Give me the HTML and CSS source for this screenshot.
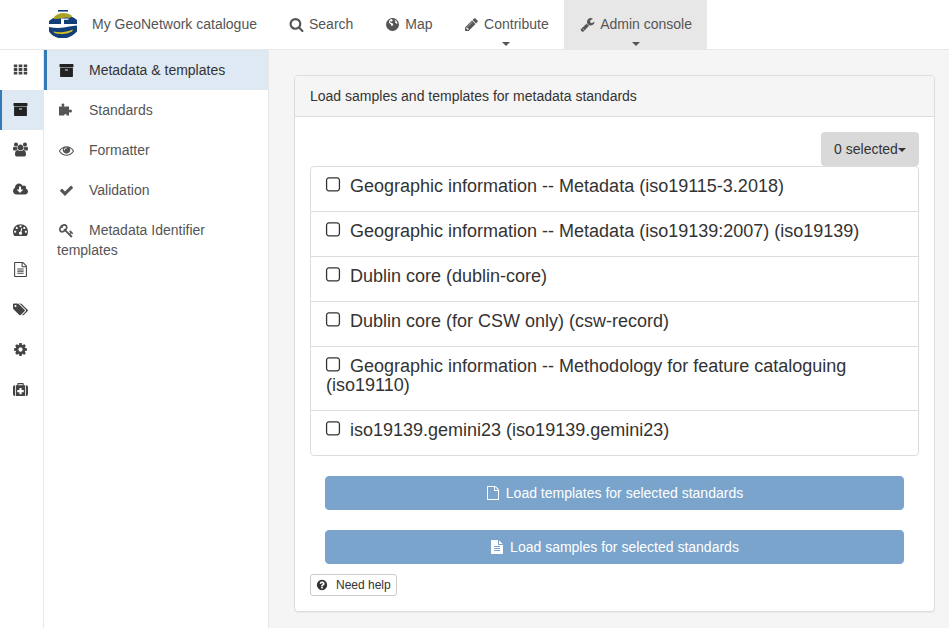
FILE: index.html
```html
<!DOCTYPE html>
<html lang="en">
<head>
<meta charset="utf-8">
<title>My GeoNetwork catalogue</title>
<link rel="stylesheet" href="styles.css">
</head>
<body>
<svg class="defs" aria-hidden="true">
  <symbol id="search" viewBox="0 0 1792 1792"><path d="M1216 832q0-185-131.5-316.5t-316.5-131.5-316.5 131.5-131.5 316.5 131.5 316.5 316.5 131.5 316.5-131.5 131.5-316.5zm512 832q0 52-38 90t-90 38q-54 0-90-38l-343-342q-179 124-399 124-143 0-273.5-55.5t-225-150-150-225-55.5-273.5 55.5-273.5 150-225 225-150 273.5-55.5 273.5 55.5 225 150 150 225 55.5 273.5q0 220-124 399l343 343q37 37 37 90z"/></symbol>
  <symbol id="globe" viewBox="0 0 1792 1792"><path fill-rule="evenodd" d="M896 128a768 768 0 1 0 .1 0zM560 300q120-50 250-50-10 70 60 90 90 30 50 110-70 30-90 100-70 20-110-30-60-20-110 30-40 50 0 110 60-30 100 20 90 0 130 50 60 60 130 70 50 60-20 130-30 100-100 170-80-10-100-120-20-90-110-130-80-40-120-120-50-70-60-130 40-190 200-300zM1180 330q170 90 260 260 40 90 50 180-70 60-130 10-50-70-120-80-80-50-20-130 60-80-40-120z"/></symbol>
  <symbol id="pencil" viewBox="0 0 1792 1792"><path d="M491 1536l91-91-235-235-91 91v107h128v128h107zm523-928q0-22-22-22-10 0-17 7l-542 542q-7 7-7 17 0 22 22 22 10 0 17-7l542-542q7-7 7-17zm-54-192l416 416-832 832h-416v-416zm683 96q0 53-37 90l-166 166-416-416 166-165q36-38 90-38 53 0 91 38l235 234q37 39 37 91z"/></symbol>
  <symbol id="wrench" viewBox="0 0 1792 1792"><path d="M448 1472q0-26-19-45t-45-19-45 19-19 45 19 45 45 19 45-19 19-45zm644-420l-682 682q-37 37-90 37-52 0-91-37l-106-108q-38-36-38-90 0-53 38-91l681-681q39 98 114.5 173.5t173.5 114.5zm634-435q0 39-23 106-47 134-164.5 217.5t-258.5 83.5q-185 0-316.5-131.5t-131.5-316.5 131.5-316.5 316.5-131.5q58 0 121.5 16.5t107.5 46.5q16 11 16 28t-16 28l-293 169v224l193 107q5-3 79-48.5t135.5-81 70.5-35.5q15 0 23.5 10t8.5 25z"/></symbol>
  <symbol id="th" viewBox="0 0 1792 1792"><path d="M96 288h416v336h-416zM680 288h432v336h-432zM1280 288h416v336h-416zM96 728h416v336h-416zM680 728h432v336h-432zM1280 728h416v336h-416zM96 1168h416v336h-416zM680 1168h432v336h-432zM1280 1168h416v336h-416z"/></symbol>
  <symbol id="archive" viewBox="0 0 1792 1792"><path d="M1088 832q0-26-19-45t-45-19h-256q-26 0-45 19t-19 45 19 45 45 19h256q26 0 45-19t19-45zm576-192v960q0 26-19 45t-45 19h-1408q-26 0-45-19t-19-45v-960q0-26 19-45t45-19h1408q26 0 45 19t19 45zm64-448v256q0 26-19 45t-45 19h-1536q-26 0-45-19t-19-45v-256q0-26 19-45t45-19h1536q26 0 45 19t19 45z"/></symbol>
  <symbol id="users" viewBox="0 0 1920 1792"><path d="M593 896q-162 5-265 128h-134q-82 0-138-40.5t-56-118.5q0-353 124-353 6 0 43.5 21t97.5 42.5 119 21.5q67 0 133-23-5 37-5 66 0 139 81 256zm1071 637q0 120-73 189.5t-194 69.5h-874q-121 0-194-69.5t-73-189.5q0-53 3.5-103.5t14-109 26.5-108.5 43-97.5 62-81 85.5-53.5 111.5-20q10 0 43 21.5t73 48 107 48 135 21.5 135-21.5 107-48 73-48 43-21.5q61 0 111.5 20t85.5 53.5 62 81 43 97.5 26.5 108.5 14 109 3.5 103.5zm-1024-1277q0 106-75 181t-181 75-181-75-75-181 75-181 181-75 181 75 75 181zm704 384q0 159-112.5 271.5t-271.5 112.5-271.5-112.5-112.5-271.5 112.5-271.5 271.5-112.5 271.5 112.5 112.5 271.5zm576 225q0 78-56 118.5t-138 40.5h-134q-103-123-265-128 81-117 81-256 0-29-5-66 66 23 133 23 59 0 119-21.5t97.5-42.5 43.5-21q124 0 124 353zm-128-609q0 106-75 181t-181 75-181-75-75-181 75-181 181-75 181 75 75 181z"/></symbol>
  <symbol id="cloud" viewBox="0 0 1920 1792"><path d="M1280 928q0-14-9-23t-23-9h-224v-352q0-13-9.5-22.5t-22.5-9.5h-192q-13 0-22.5 9.5t-9.5 22.5v352h-224q-13 0-22.5 9.5t-9.5 22.5q0 14 9 23l352 352q9 9 23 9t23-9l351-351q10-12 10-24zm640 224q0 159-112.5 271.5t-271.5 112.5h-1088q-185 0-316.5-131.5t-131.5-316.5q0-130 70-240t188-165q-2-30-2-43 0-212 150-362t362-150q156 0 285.5 87t188.5 231q71-62 166-62 106 0 181 75t75 181q0 76-41 138 130 31 213.5 135.5t83.5 238.5z"/></symbol>
  <symbol id="dashboard" viewBox="0 0 1792 1792"><path d="M384 1152q0-53-37.5-90.5t-90.5-37.5-90.5 37.5-37.5 90.5 37.5 90.5 90.5 37.5 90.5-37.5 37.5-90.5zm192-448q0-53-37.5-90.5t-90.5-37.5-90.5 37.5-37.5 90.5 37.5 90.5 90.5 37.5 90.5-37.5 37.5-90.5zm428 481l101-382q6-26-7.5-48.5t-38.5-29.5-48 6.5-30 39.5l-101 382q-60 5-107 43.5t-63 98.5q-20 77 20 146t117 89 146-20 89-117q16-60-6-117t-72-91zm660-33q0-53-37.5-90.5t-90.5-37.5-90.5 37.5-37.5 90.5 37.5 90.5 90.5 37.5 90.5-37.5 37.5-90.5zm-640-640q0-53-37.5-90.5t-90.5-37.5-90.5 37.5-37.5 90.5 37.5 90.5 90.5 37.5 90.5-37.5 37.5-90.5zm448 192q0-53-37.5-90.5t-90.5-37.5-90.5 37.5-37.5 90.5 37.5 90.5 90.5 37.5 90.5-37.5 37.5-90.5zm320 448q0 261-141 483-19 29-54 29h-1402q-35 0-54-29-141-221-141-483 0-182 71-348t191-286 286-191 348-71 348 71 286 191 191 286 71 348z"/></symbol>
  <symbol id="file-text-o" viewBox="0 0 1792 1792"><path d="M1596 380q28 28 48 76t20 88v1152q0 40-28 68t-68 28h-1344q-40 0-68-28t-28-68v-1600q0-40 28-68t68-28h896q40 0 88 20t76 48zm-444-244v376h376q-10-29-22-41l-313-313q-12-12-41-22zm384 1528v-1024h-416q-40 0-68-28t-28-68v-416h-768v1536h1280zm-1024-864q0-14 9-23t23-9h704q14 0 23 9t9 23v64q0 14-9 23t-23 9h-704q-14 0-23-9t-9-23v-64zm736 224q14 0 23 9t9 23v64q0 14-9 23t-23 9h-704q-14 0-23-9t-9-23v-64q0-14 9-23t23-9h704zm0 256q14 0 23 9t9 23v64q0 14-9 23t-23 9h-704q-14 0-23-9t-9-23v-64q0-14 9-23t23-9h704z"/></symbol>
  <symbol id="file-o" viewBox="0 0 1792 1792"><path d="M1596 380q28 28 48 76t20 88v1152q0 40-28 68t-68 28h-1344q-40 0-68-28t-28-68v-1600q0-40 28-68t68-28h896q40 0 88 20t76 48zm-444-244v376h376q-10-29-22-41l-313-313q-12-12-41-22zm384 1528v-1024h-416q-40 0-68-28t-28-68v-416h-768v1536h1280z"/></symbol>
  <symbol id="file-text" viewBox="0 0 1792 1792"><path d="M1596 476q14 14 28 36h-472v-472q22 14 36 28zm-476 164h544v1056q0 40-28 68t-68 28h-1344q-40 0-68-28t-28-68v-1600q0-40 28-68t68-28h800v544q0 40 28 68t68 28zm160 736v-64q0-14-9-23t-23-9h-704q-14 0-23 9t-9 23v64q0 14 9 23t23 9h704q14 0 23-9t9-23zm0-256v-64q0-14-9-23t-23-9h-704q-14 0-23 9t-9 23v64q0 14 9 23t23 9h704q14 0 23-9t9-23zm0-256v-64q0-14-9-23t-23-9h-704q-14 0-23 9t-9 23v64q0 14 9 23t23 9h704q14 0 23-9t9-23z"/></symbol>
  <symbol id="tags" viewBox="0 0 1920 1792"><path d="M448 448q0-53-37.5-90.5t-90.5-37.5-90.5 37.5-37.5 90.5 37.5 90.5 90.5 37.5 90.5-37.5 37.5-90.5zm1067 576q0 53-37 90l-491 492q-39 37-91 37-53 0-90-37l-715-716q-38-37-64.5-101t-26.5-117v-416q0-52 38-90t90-38h416q53 0 117 26.5t102 64.5l715 714q37 39 37 91zm384 0q0 53-37 90l-491 492q-39 37-91 37-36 0-59-14t-53-45l470-470q37-37 37-90 0-52-37-91l-715-714q-38-38-102-64.5t-117-26.5h224q53 0 117 26.5t102 64.5l715 714q37 39 37 91z"/></symbol>
  <symbol id="cog" viewBox="0 0 1792 1792"><path d="M1152 896q0-106-75-181t-181-75-181 75-75 181 75 181 181 75 181-75 75-181zm512-109v222q0 12-8 23t-20 13l-185 28q-19 54-39 91 35 50 107 138 10 12 10 25t-9 23q-27 37-99 108t-94 71q-12 0-26-9l-138-108q-44 23-91 38-16 136-29 186-7 28-36 28h-222q-14 0-24.5-8.5t-11.5-21.5l-28-184q-49-16-90-37l-141 107q-10 9-25 9-14 0-25-11-126-114-165-168-7-10-7-23 0-12 8-23 15-21 51-66.5t54-70.5q-27-50-41-99l-183-27q-13-2-21-12.5t-8-23.5v-222q0-12 8-23t19-13l186-28q14-46 39-92-40-57-107-138-10-12-10-24 0-10 9-23 26-36 98.5-107.5t94.5-71.5q13 0 26 10l138 107q44-23 91-38 16-136 29-186 7-28 36-28h222q14 0 24.5 8.5t11.5 21.5l28 184q49 16 90 37l142-107q9-9 24-9 13 0 25 10 129 119 165 170 7 8 7 22 0 12-8 23-15 21-51 66.5t-54 70.5q26 50 41 98l183 28q13 2 21 12.5t8 23.5z"/></symbol>
  <symbol id="medkit" viewBox="0 0 1792 1792"><path d="M1280 1184v-192q0-14-9-23t-23-9h-224v-224q0-14-9-23t-23-9h-192q-14 0-23 9t-9 23v224h-224q-14 0-23 9t-9 23v192q0 14 9 23t23 9h224v224q0 14 9 23t23 9h192q14 0 23-9t9-23v-224h224q14 0 23-9t9-23zm-640-800h512v-128h-512v128zm-384 0v1280h-32q-92 0-158-66t-66-158v-832q0-92 66-158t158-66h32zm1184 0v1280h-1088v-1280h160v-160q0-40 28-68t68-28h576q40 0 68 28t28 68v160h160zm352 224v832q0 92-66 158t-158 66h-32v-1280h32q92 0 158 66t66 158z"/></symbol>
  <symbol id="puzzle" viewBox="0 0 1792 1792"><path d="M0 420h360v-60q-60-60-60-150 0-150 170-150t170 150q0 90-60 150v60h620v420q60-60 170-60 180 0 180 180t-180 180q-110 0-170-60v410h-300v-60q0-120-130-120t-130 120v60h-640z"/></symbol>
  <symbol id="eye" viewBox="0 0 1792 1792"><path d="M1664 960q-152-236-381-353 61 104 61 225 0 185-131.5 316.5t-316.5 131.5-316.5-131.5-131.5-316.5q0-121 61-225-229 117-381 353 133 205 333.5 326.5t434.5 121.5 434.5-121.5 333.5-326.5zm-720-384q0-20-14-34t-34-14q-125 0-214.5 89.5t-89.5 214.5q0 20 14 34t34 14 34-14 14-34q0-86 61-147t147-61q20 0 34-14t14-34zm848 384q0 34-20 69-140 230-376.5 368.5t-499.5 138.5-499.5-139-376.5-368q-20-35-20-69t20-69q140-229 376.5-368t499.5-139 499.5 139 376.5 368q20 35 20 69z"/></symbol>
  <symbol id="check" viewBox="0 0 1792 1792"><path d="M1671 566q0 40-28 68l-724 724-136 136q-28 28-68 28t-68-28l-136-136-362-362q-28-28-28-68t28-68l136-136q28-28 68-28t68 28l294 295 656-657q28-28 68-28t68 28l136 136q28 28 28 68z"/></symbol>
  <symbol id="key" viewBox="0 0 1792 1792"><path d="M832 512q0-80-56-136t-136-56-136 56-56 136q0 42 19 83-41-19-83-19-80 0-136 56t-56 136 56 136 136 56 136-56 56-136q0-42-19-83 41 19 83 19 80 0 136-56t56-136zm851 704q0 17-49 66t-66 49q-9 0-28.5-16t-36.5-33-38.5-40-24.5-26l-96 96 220 220q28 28 28 68 0 42-39 81t-81 39q-40 0-68-28l-671-671q-176 131-365 131-163 0-265.5-102.5t-102.5-265.5q0-160 95-313t248-248 313-95q163 0 265.5 102.5t102.5 265.5q0 189-131 365l355 355 96-96q-3-3-26-24.5t-40-38.5-33-36.5-16-28.5q0-17 49-66t66-49q13 0 23 10 6 6 46 44.5t82 79.5 86.5 86 73 78 28.5 41z"/></symbol>
  <symbol id="question" viewBox="0 0 1792 1792"><path d="M1024 1376v-192q0-14-9-23t-23-9h-192q-14 0-23 9t-9 23v192q0 14 9 23t23 9h192q14 0 23-9t9-23zm256-672q0-88-55.5-163t-138.5-116-170-41q-243 0-371 213-15 24 8 42l132 100q7 6 19 6 16 0 25-12 53-68 86-92 34-24 86-24 48 0 85.5 26t37.5 59q0 38-20 61t-68 45q-63 28-115.5 86.5t-52.5 125.5v36q0 14 9 23t23 9h192q14 0 23-9t9-23q0-19 21.5-49.5t54.5-49.5q32-18 49-28.5t46-35 44.5-48 28-60.5 12.5-81zm384 192q0 209-103 385.5t-279.5 279.5-385.5 103-385.5-103-279.5-279.5-103-385.5 103-385.5 279.5-279.5 385.5-103 385.5 103 279.5 279.5 103 385.5z"/></symbol>
  <symbol id="square-o" viewBox="0 0 1792 1792"><path d="M1312 256h-832q-66 0-113 47t-47 113v832q0 66 47 113t113 47h832q66 0 113-47t47-113v-832q0-66-47-113t-113-47zm288 160v832q0 119-84.5 203.5t-203.5 84.5h-832q-119 0-203.5-84.5t-84.5-203.5v-832q0-119 84.5-203.5t203.5-84.5h832q119 0 203.5 84.5t84.5 203.5z"/></symbol>
  <clipPath id="logo-clip"><circle cx="14" cy="14" r="14"/></clipPath>
</svg>

<header class="navbar">
  <a class="brand">
    <svg class="logo" viewBox="0 0 28 28">
      <g clip-path="url(#logo-clip)">
        <path d="M9 0h10v1.600h-10z" fill="#123f7a"/>
        <path d="M0 11q6-5 14-6 8 0 14 5v4h-13v-5h-3v5h-12z" fill="#123f7a"/>
        <path d="M5 7q4-4 9-4 6 0 9 3l-2 2q-4-1-7 0-4 1-9 1z" fill="#aaa326"/>
        <path d="M12 8.600h2.500v6.400h-2.500zM14.500 8.600h5v1.200h-5z" fill="#fff"/>
        <path d="M0 17q8 1.500 15 .5 7-1.500 13-2v6q-7 7-14 7-9 0-14-7z" fill="#123f7a"/>
        <path d="M4 21.500q6 1.200 11 .5 5-.8 9-2.500l-1 2q-4 2-9 2.500-5 .2-8-.8z" fill="#d9c11f"/>
      </g>
    </svg>
    <span>My GeoNetwork catalogue</span>
  </a>
  <nav class="nav">
    <a class="nav-item"><svg class="nav-icon"><use href="#search"/></svg>Search</a>
    <a class="nav-item"><svg class="nav-icon"><use href="#globe"/></svg>Map</a>
    <a class="nav-item nav-item-tight"><svg class="nav-icon"><use href="#pencil"/></svg>Contribute<i class="nav-caret nav-caret-shift"></i></a>
    <a class="nav-item nav-item-active"><svg class="nav-icon"><use href="#wrench"/></svg>Admin console<i class="nav-caret"></i></a>
  </nav>
</header>

<div class="layout">
  <aside class="rail">
    <a class="rail-item"><svg class="rail-icon"><use href="#th"/></svg></a>
    <a class="rail-item rail-item-active"><svg class="rail-icon"><use href="#archive"/></svg></a>
    <a class="rail-item"><svg class="rail-icon"><use href="#users"/></svg></a>
    <a class="rail-item"><svg class="rail-icon"><use href="#cloud"/></svg></a>
    <a class="rail-item"><svg class="rail-icon"><use href="#dashboard"/></svg></a>
    <a class="rail-item"><svg class="rail-icon"><use href="#file-text-o"/></svg></a>
    <a class="rail-item"><svg class="rail-icon"><use href="#tags"/></svg></a>
    <a class="rail-item"><svg class="rail-icon"><use href="#cog"/></svg></a>
    <a class="rail-item"><svg class="rail-icon"><use href="#medkit"/></svg></a>
  </aside>
  <aside class="subnav">
    <a class="subnav-item subnav-item-active"><svg class="subnav-icon"><use href="#archive"/></svg>Metadata &amp; templates</a>
    <a class="subnav-item"><svg class="subnav-icon"><use href="#puzzle"/></svg>Standards</a>
    <a class="subnav-item"><svg class="subnav-icon"><use href="#eye"/></svg>Formatter</a>
    <a class="subnav-item"><svg class="subnav-icon"><use href="#check"/></svg>Validation</a>
    <a class="subnav-item"><svg class="subnav-icon"><use href="#key"/></svg>Metadata Identifier templates</a>
  </aside>
  <main class="content">
    <section class="panel">
      <div class="panel-heading">Load samples and templates for metadata standards</div>
      <div class="panel-body">
        <div class="select-row"><button class="select-btn">0 selected<i class="select-caret"></i></button></div>
        <ul class="standards">
          <li class="standard"><svg class="check"><use href="#square-o"/></svg>Geographic information -- Metadata (iso19115-3.2018)</li>
          <li class="standard"><svg class="check"><use href="#square-o"/></svg>Geographic information -- Metadata (iso19139:2007) (iso19139)</li>
          <li class="standard"><svg class="check"><use href="#square-o"/></svg>Dublin core (dublin-core)</li>
          <li class="standard"><svg class="check"><use href="#square-o"/></svg>Dublin core (for CSW only) (csw-record)</li>
          <li class="standard"><svg class="check"><use href="#square-o"/></svg>Geographic information -- Methodology for feature cataloguing (iso19110)</li>
          <li class="standard"><svg class="check"><use href="#square-o"/></svg>iso19139.gemini23 (iso19139.gemini23)</li>
        </ul>
        <div class="actions">
          <button class="action"><svg class="action-icon"><use href="#file-o"/></svg>Load templates for selected standards</button>
          <button class="action"><svg class="action-icon"><use href="#file-text"/></svg>Load samples for selected standards</button>
        </div>
        <button class="help"><svg class="help-icon"><use href="#question"/></svg>Need help</button>
      </div>
    </section>
  </main>
</div>
</body>
</html>
```

FILE: styles.css
```css
* { box-sizing: border-box; }
html, body { height: 100%; }
body {
  margin: 0;
  display: flex;
  flex-direction: column;
  overflow: hidden;
  background: #f5f5f5;
  color: #333;
  font: 14px/20px "Liberation Sans", Arial, sans-serif;
}
.defs { display: none; }
svg { fill: currentColor; }

.navbar {
  flex: none;
  height: 50px;
  display: flex;
  background: #fff;
  border-bottom: 1px solid #e7e7e7;
  color: #555;
}
.brand {
  width: 275px;
  padding: 0 0 1px 49px;
  display: flex;
  align-items: center;
}
.logo { width: 28px; height: 28px; margin: -1px 15px 0 0; }
.nav { display: flex; }
.nav-item {
  position: relative;
  height: 49px;
  margin-right: 3px;
  padding: 0 15px 1px;
  display: flex;
  align-items: center;
}
.nav-item-tight { margin: 0 0 0 -.5px; padding-right: 15.5px; }
.nav-item-active { margin-right: 0; padding-left: 17px; background: #e7e7e7; }
.nav-icon { width: 15px; height: 15px; margin: 0 5px 0 -1px; }
.nav-caret {
  position: absolute;
  left: 50%;
  bottom: 3px;
  margin-left: -4px;
  border: 4px solid transparent;
  border-bottom-width: 0;
  border-top-color: #555;
}
.nav-caret-shift { margin-left: -5px; }

.layout { flex: 1; min-height: 0; display: flex; }
.rail {
  flex: none;
  width: 44px;
  background: #fff;
  border-right: 1px solid #e7e7e7;
  color: #444;
}
.rail-item {
  height: 40px;
  padding: 0 2px 1px 0;
  display: flex;
  align-items: center;
  justify-content: center;
}
.rail-item-active { background: #dfe9f4; border-left: 2px solid #337ab7; color: #222; padding-right: 4px; }
.rail-icon { width: 15px; height: 15px; }

.subnav {
  flex: none;
  width: 225px;
  background: #fff;
  border-right: 1px solid #e7e7e7;
  color: #555;
}
.subnav-item { display: block; padding: 10px 13px; }
.subnav-item-active {
  background: #dfe9f4;
  border-left: 3px solid #337ab7;
  padding-left: 10px;
  color: #333;
}
.subnav-icon {
  width: 15px;
  height: 15px;
  margin: 0 15px 0 2px;
  vertical-align: -3px;
}
.subnav-item-active .subnav-icon { color: #222; }

.content { flex: 1; min-width: 0; padding: 25px 14px 0 25px; }
.panel {
  background: #fff;
  border: 1px solid #ddd;
  border-radius: 4px;
  box-shadow: 0 1px 1px rgba(0, 0, 0, .05);
}
.panel-heading {
  height: 41px;
  padding: 10px 15px;
  background: #f5f5f5;
  border-bottom: 1px solid #ddd;
  border-radius: 3px 3px 0 0;
}
.panel-body { padding: 15px; }
.select-row { display: flex; justify-content: flex-end; }
.select-btn {
  width: 98px;
  height: 34px;
  padding: 0;
  border: 0;
  border-radius: 4px;
  background: #d9d9d9;
  color: #333;
  font: inherit;
  white-space: nowrap;
}
.select-caret {
  display: inline-block;
  vertical-align: 2px;
  border: 4px solid transparent;
  border-bottom-width: 0;
  border-top-color: #333;
}
.standards {
  margin: 0;
  padding: 0;
  list-style: none;
  border: 1px solid #ddd;
  border-radius: 4px;
}
.standard {
  padding: 10px 15px 15px;
  border-top: 1px solid #ddd;
  font-size: 18px;
  line-height: 19px;
}
.standard:first-child { border-top: 0; }
.check { width: 18px; height: 18px; margin: -2px 8px -2px -2px; }
.actions {
  margin: 20px 15px 10px;
  display: flex;
  flex-direction: column;
  gap: 20px;
}
.action {
  height: 34px;
  border: 1px solid #7aa4cc;
  border-radius: 4px;
  background: #7aa4cc;
  color: #fff;
  font: inherit;
}
.action-icon { width: 14px; height: 14px; margin-right: 6px; vertical-align: -2px; }
.help {
  display: block;
  height: 22px;
  padding: 0 5px;
  border: 1px solid #ccc;
  border-radius: 3px;
  background: #fff;
  color: #333;
  font: 12px/18px "Liberation Sans", Arial, sans-serif;
}
.help-icon { width: 12px; height: 12px; margin-right: 8px; vertical-align: -2px; }
```
